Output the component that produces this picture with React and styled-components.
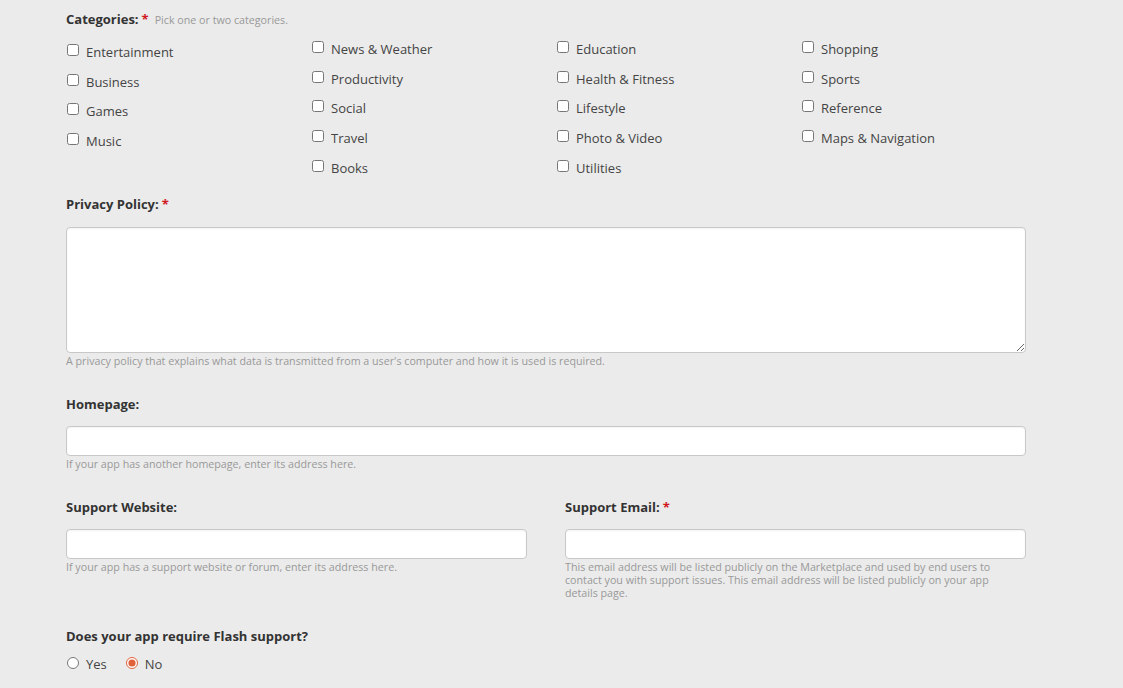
import React from "react";
import styled, { createGlobalStyle } from "styled-components";

const GlobalStyle = createGlobalStyle`
    html, body {
        margin: 0;
        padding: 0;
        background: #ebebeb;
        font-family: "Open Sans", "Noto Sans", sans-serif;
        color: #333;
    }
`

const Form = styled.form`
    width: 960px;
    margin-left: 66px;
    padding-top: 10px;
`
const Field = styled.div`
    margin-top: ${props => props.$top || 0}px;
    margin-bottom: ${props => props.$gap || 0}px;
`
const Label = styled.div`
    font-size: 13px;
    font-weight: 700;
    color: #333;
    line-height: 18px;
    margin-bottom: ${props => props.$space || 0}px;
`
const Req = styled.span`
    color: #d0191e;
    margin-left: 3px;
`
const Inline = styled.span`
    font-size: 10.7px;
    font-weight: 400;
    color: #999;
    margin-left: 6px;
`
const CatGrid = styled.div`
    display: grid;
    grid-template-columns: repeat(4, 245px);
    margin-top: 5px;
`
const CatCol = styled.div`
    display: flex;
    flex-direction: column;
    padding-top: ${props => props.$offset || 0}px;
`
const Check = styled.label`
    display: flex;
    align-items: center;
    height: 29.7px;
    font-size: 13px;
    color: #444;

    input {
        margin: 0 7px 4px 1px;
        width: 12px;
        height: 12px;
    }
`
const TextArea = styled.textarea`
    display: block;
    box-sizing: border-box;
    width: 960px;
    height: 126px;
    border: 1px solid #c8c8c8;
    border-radius: 4px;
    background: #fff;
    resize: vertical;
    box-shadow: inset 0 1px 2px rgba(0,0,0,0.05);
`
const Input = styled.input`
    display: block;
    box-sizing: border-box;
    width: ${props => props.$w || 960}px;
    height: 30px;
    border: 1px solid #c8c8c8;
    border-radius: 4px;
    background: #fff;
    box-shadow: inset 0 1px 2px rgba(0,0,0,0.05);
`
const Hint = styled.div`
    font-size: 10.7px;
    color: #999;
    line-height: 13px;
    margin-top: 2px;
    max-width: ${props => props.$max || 960}px;
`
const Pair = styled.div`
    display: flex;
    gap: 38px;
`
const Half = styled.div`
    width: 461px;
`
const Radios = styled.div`
    display: flex;
    gap: 18px;
    margin-top: 10px;
`
const Radio = styled.label`
    display: flex;
    align-items: center;
    font-size: 13px;
    color: #444;

    input {
        margin: 0 7px 2px 1px;
        width: 12px;
        height: 12px;
        accent-color: #e0603a;
    }
`

const columns = [
    { offset: 3, items: ["Entertainment", "Business", "Games", "Music"] },
    { offset: 0, items: ["News & Weather", "Productivity", "Social", "Travel", "Books"] },
    { offset: 0, items: ["Education", "Health & Fitness", "Lifestyle", "Photo & Video", "Utilities"] },
    { offset: 0, items: ["Shopping", "Sports", "Reference", "Maps & Navigation"] },
]

const App = () => {
    return(
        <>
            <GlobalStyle/>
            <Form>
                <Field $gap={13}>
                    <Label>
                        Categories:<Req>*</Req>
                        <Inline>Pick one or two categories.</Inline>
                    </Label>
                    <CatGrid>
                        {columns.map((col, i) => (
                            <CatCol key={i} $offset={col.offset}>
                                {col.items.map(item => (
                                    <Check key={item}>
                                        <input type="checkbox"/> {item}
                                    </Check>
                                ))}
                            </CatCol>
                        ))}
                    </CatGrid>
                </Field>

                <Field $gap={27}>
                    <Label $space={14}>Privacy Policy:<Req>*</Req></Label>
                    <TextArea/>
                    <Hint>A privacy policy that explains what data is transmitted from a user's computer and how it is used is required.</Hint>
                </Field>

                <Field $gap={27}>
                    <Label $space={13}>Homepage:</Label>
                    <Input type="text"/>
                    <Hint>If your app has another homepage, enter its address here.</Hint>
                </Field>

                <Pair>
                    <Half>
                        <Label $space={13}>Support Website:</Label>
                        <Input type="text" $w={461}/>
                        <Hint>If your app has a support website or forum, enter its address here.</Hint>
                    </Half>
                    <Half>
                        <Label $space={13}>Support Email:<Req>*</Req></Label>
                        <Input type="email" $w={461}/>
                        <Hint $max={440}>This email address will be listed publicly on the Marketplace and used by end users to contact you with support issues. This email address will be listed publicly on your app details page.</Hint>
                    </Half>
                </Pair>

                <Field $top={27}>
                    <Label>Does your app require Flash support?</Label>
                    <Radios>
                        <Radio><input type="radio" name="flash"/> Yes</Radio>
                        <Radio><input type="radio" name="flash" defaultChecked/> No</Radio>
                    </Radios>
                </Field>
            </Form>
        </>
    )
}

export default App;
